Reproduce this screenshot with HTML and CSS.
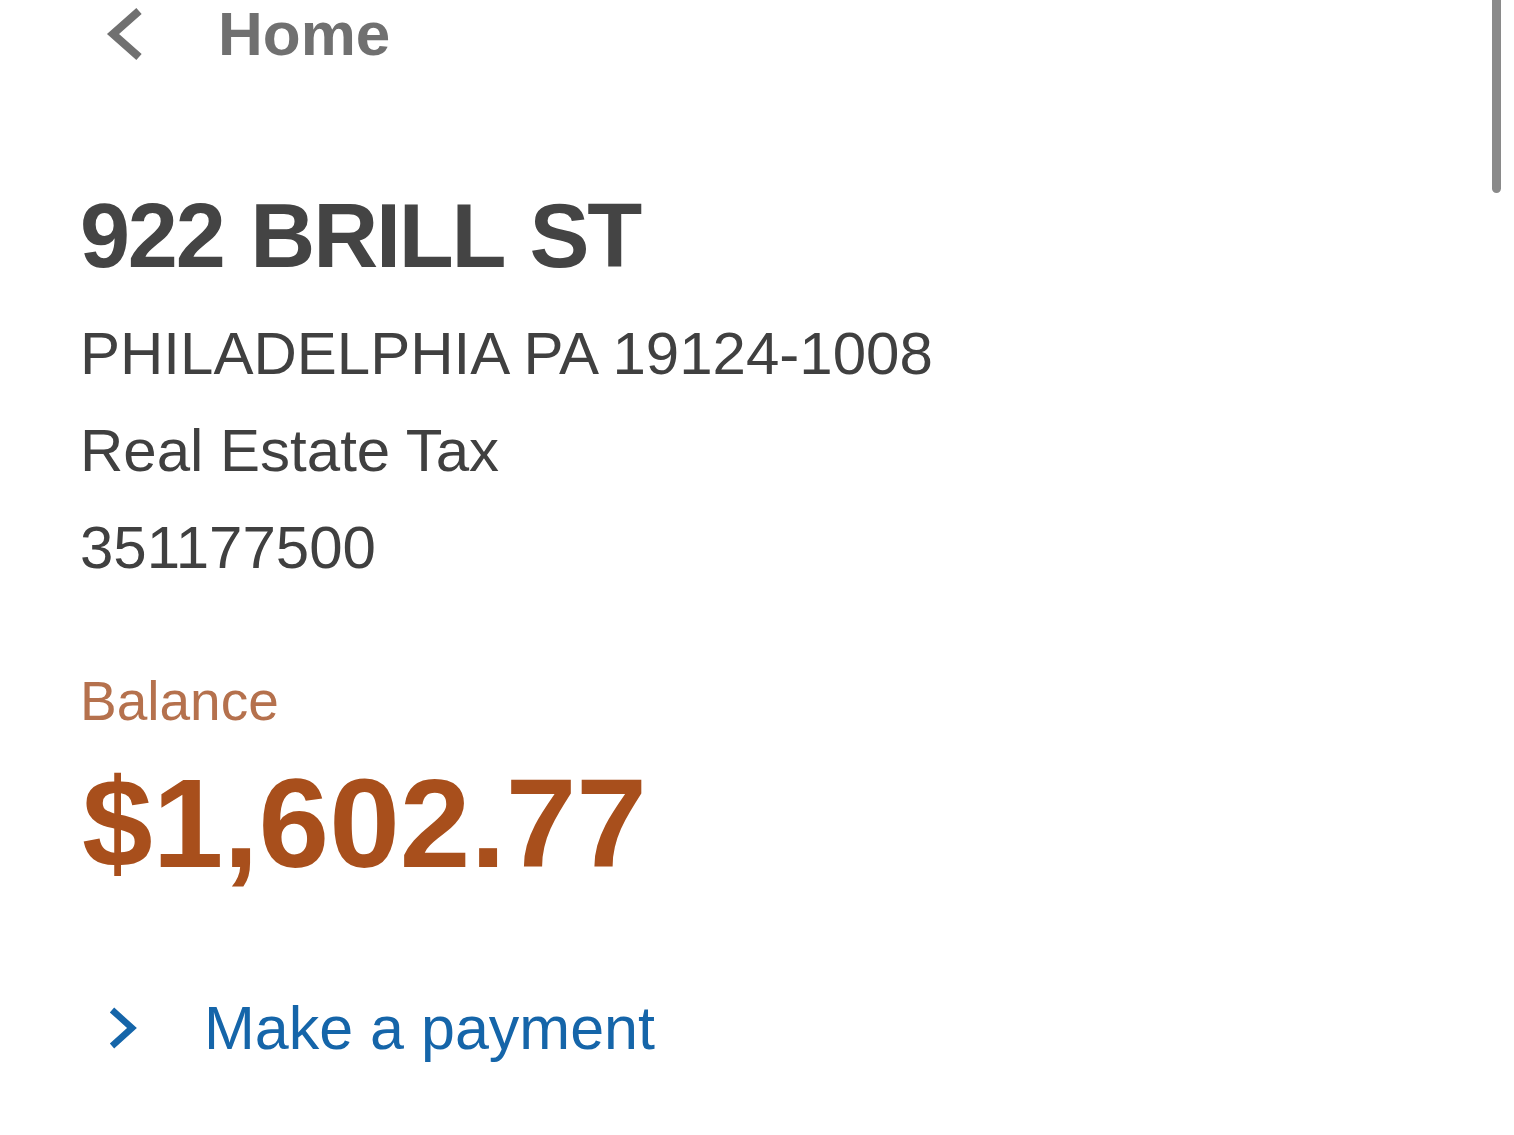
FILE: index.html
```html
<!DOCTYPE html>
<html lang="en">
<head>
    <meta charset="UTF-8">
    <meta name="viewport" content="width=device-width, initial-scale=1.0">
    <title>922 BRILL ST</title>
    <link rel="stylesheet" href="styles.css">
</head>
<body>

    <!-- Back link -->
    <div class="topbar">
        <a class="backlink" href="#">
            <svg class="chevron" width="40" height="54" viewBox="0 0 40 54">
                <path d="M35 4 L9 27 L35 50" fill="none" stroke="#707070" stroke-width="8"/>
            </svg>
            <span>Home</span>
        </a>
    </div>

    <!-- Scroll indicator -->
    <div class="scrollthumb"></div>

    <!-- Property details -->
    <div class="maincontent">
        <h1 class="address">922 BRILL ST</h1>
        <div class="details">
            <div>PHILADELPHIA PA 19124-1008</div>
            <div>Real Estate Tax</div>
            <div>351177500</div>
        </div>

        <div class="balancelabel">Balance</div>
        <div class="balanceamount">$1,602.77</div>

        <a class="paylink" href="#">
            <svg class="chevron" width="34" height="44" viewBox="0 0 34 44">
                <path d="M6 4 L26 22 L6 40" fill="none" stroke="#1565a9" stroke-width="6.5"/>
            </svg>
            <span>Make a payment</span>
        </a>
    </div>

</body>
</html>
```

FILE: styles.css
```css
body {
    font-family: "Liberation Sans", Arial, sans-serif;
    margin: 0;
    padding: 0;
    background-color: #ffffff;
    color: #404040;
}

a {
    text-decoration: none;
}

/* Top bar */
.topbar {
    padding-top: 2px;
    padding-left: 104px;
}

.backlink {
    display: flex;
    align-items: center;
    gap: 74px;
    height: 64px;
    color: #707070;
    font-size: 62px;
    font-weight: bold;
    line-height: 64px;
}

.chevron {
    display: block;
    flex-shrink: 0;
}

/* Scroll indicator */
.scrollthumb {
    position: absolute;
    top: 0;
    right: 13px;
    width: 9px;
    height: 193px;
    background-color: #8a8a8a;
    border-radius: 0 0 5px 5px;
}

/* Main content */
.maincontent {
    padding-left: 80px;
    display: flex;
    flex-direction: column;
    align-items: flex-start;
}

.address {
    margin: 120px 0 0;
    font-size: 90px;
    line-height: 100px;
    font-weight: bold;
    letter-spacing: -2.2px;
    word-spacing: 4px;
    color: #444444;
}

.details {
    margin-top: 19px;
    font-size: 60px;
    line-height: 97px;
    color: #404040;
}

.balancelabel {
    margin-top: 75px;
    font-size: 55px;
    line-height: 60px;
    color: #b5714d;
}

.balanceamount {
    margin-top: 27px;
    margin-left: 2px;
    font-size: 127px;
    line-height: 130px;
    font-weight: bold;
    color: #a84f1c;
}

.paylink {
    margin-top: 105px;
    margin-left: 26px;
    display: flex;
    align-items: center;
    gap: 64px;
    font-size: 61px;
    line-height: 70px;
    color: #1565a9;
}
```
